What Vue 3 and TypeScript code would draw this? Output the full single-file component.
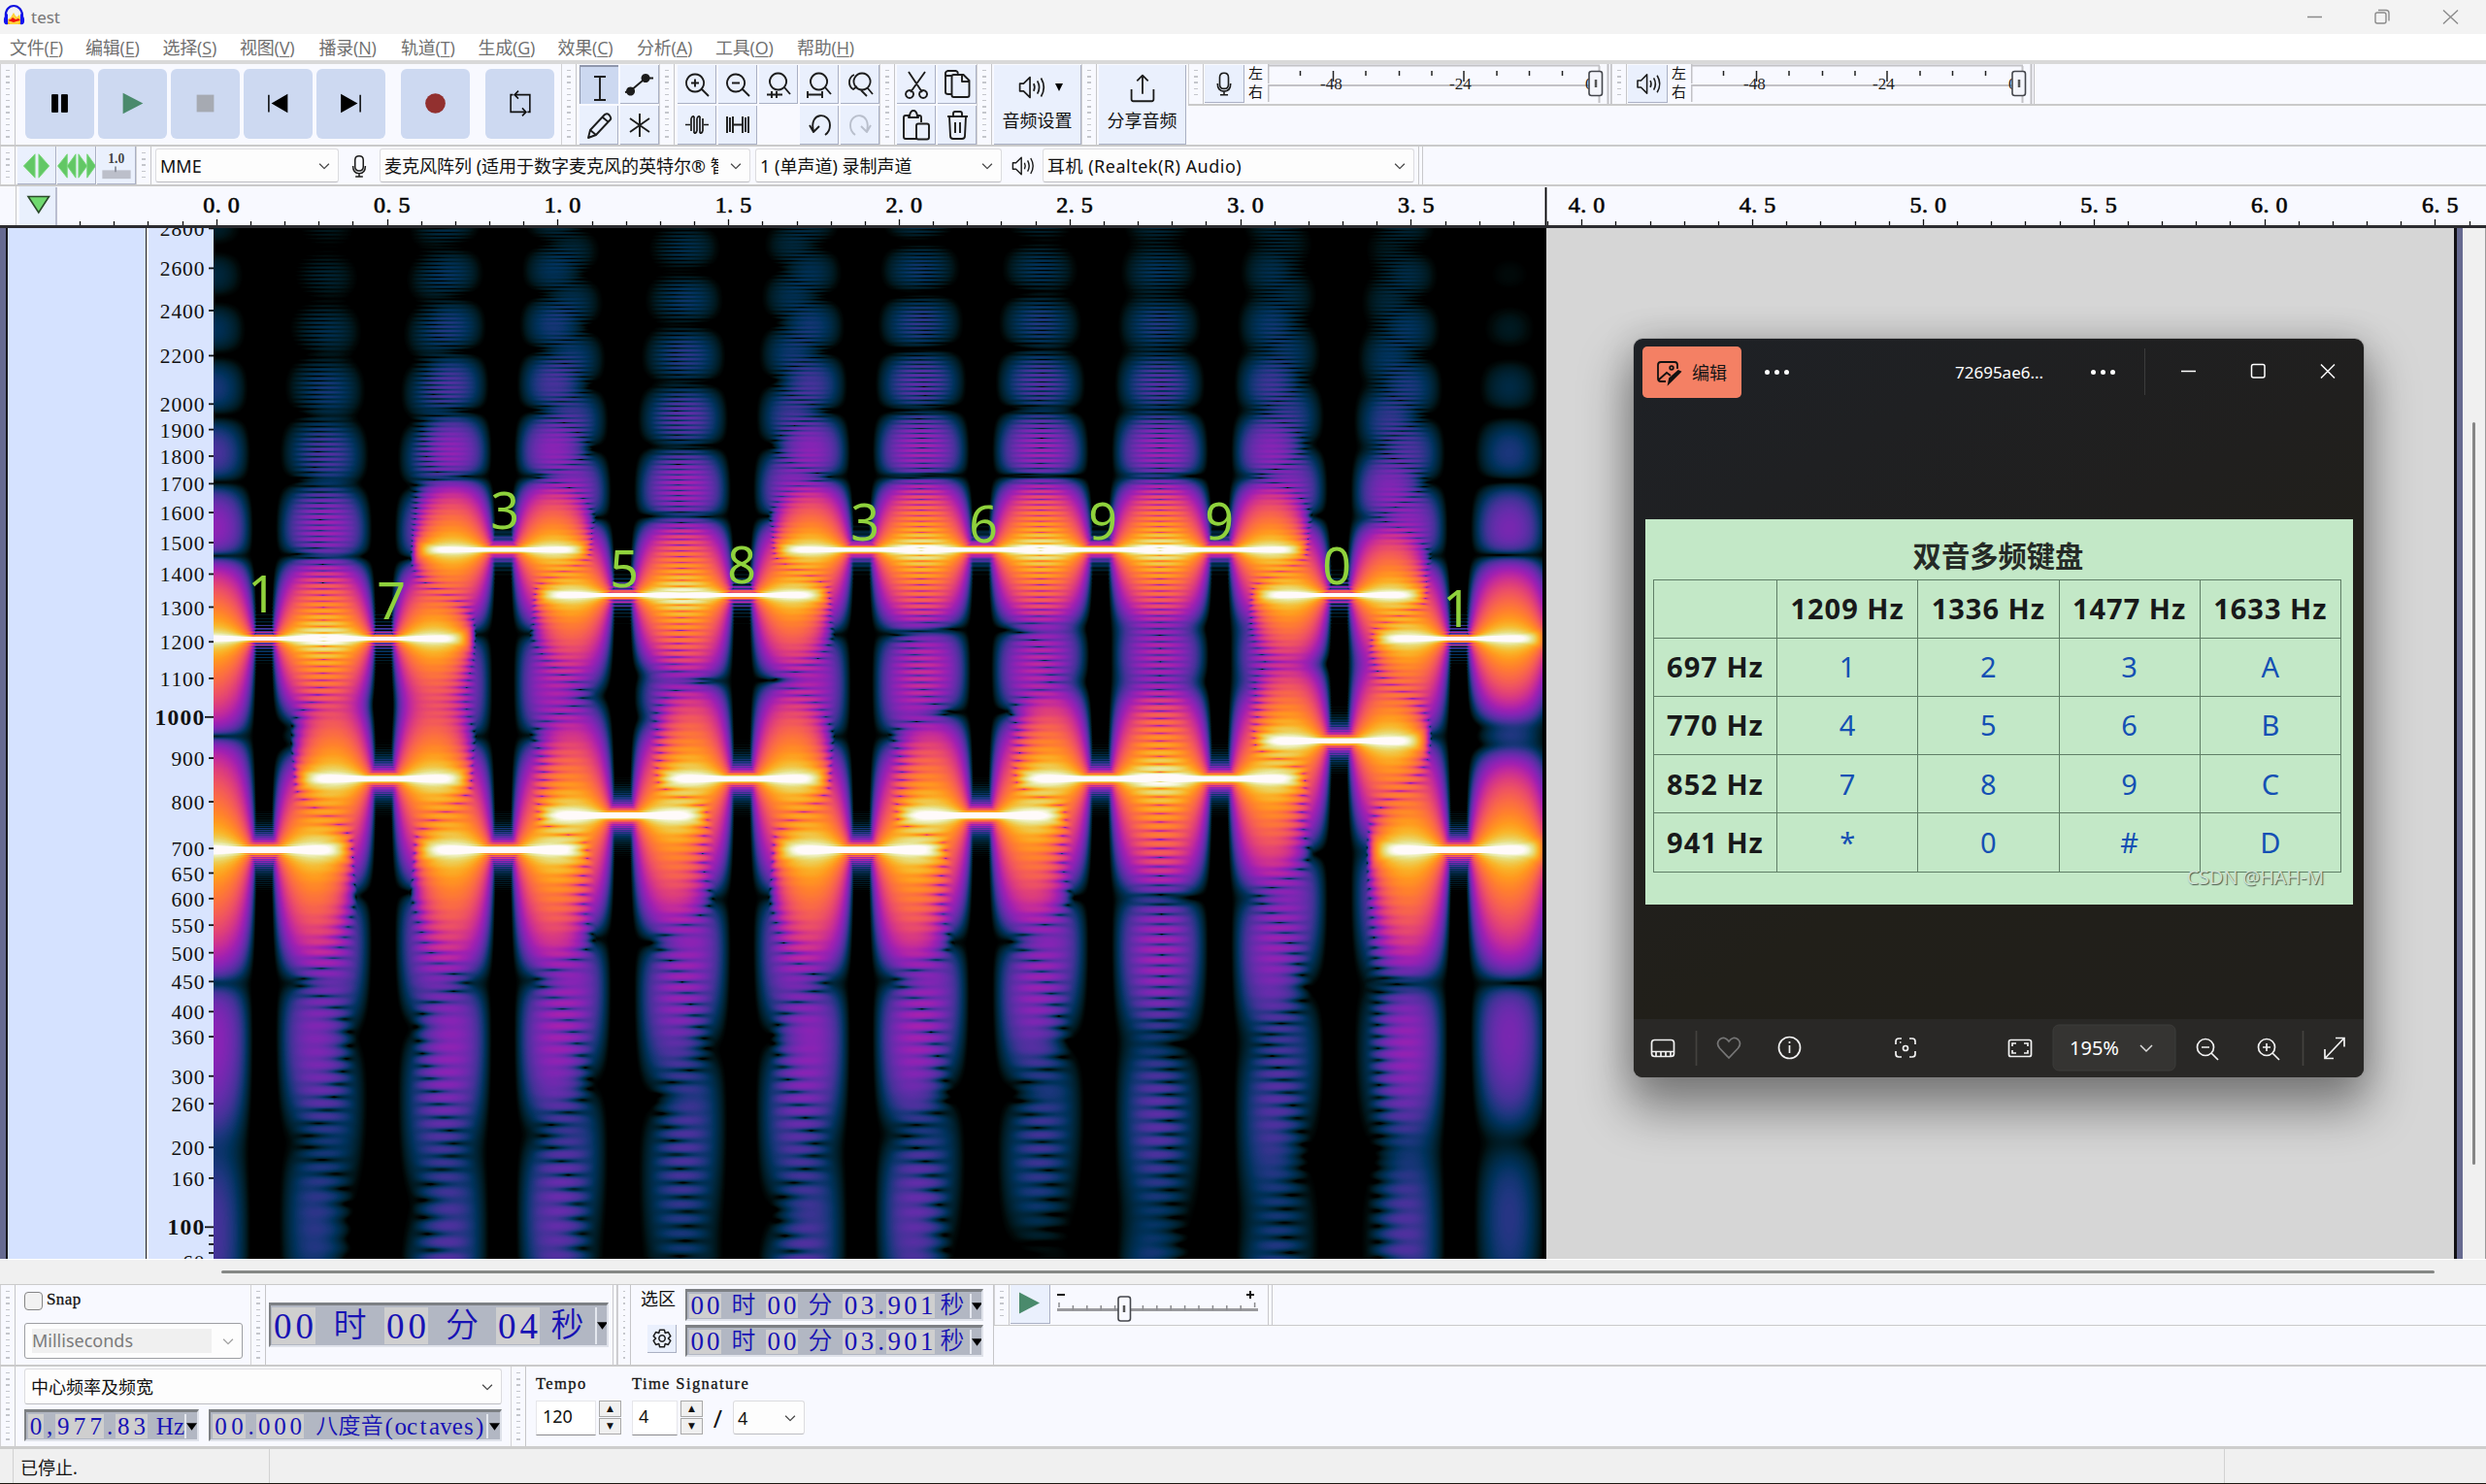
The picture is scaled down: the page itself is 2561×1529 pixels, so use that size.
<script setup lang="ts">
import { h, onMounted, ref } from 'vue'

/* ---------- menu ---------- */
const menus = [
  ['文件', 'F', 10], ['编辑', 'E', 88], ['选择', 'S', 167.500], ['视图', 'V', 247], ['播录', 'N', 328.500], ['轨道', 'T', 413],
  ['生成', 'G', 492.500], ['效果', 'C', 574.500], ['分析', 'A', 656], ['工具', 'O', 737], ['帮助', 'H', 821],
].map((m, i, a) => ({ label: m[0], key: m[1], w: i < a.length - 1 ? (a[i + 1][2] as number) - (m[2] as number) : 80 }))

/* ---------- icons (40 x 40 box) ---------- */
interface Glyph { s?: string; f?: string; c?: string; w?: number }
const glyphs: Record<string, Glyph> = {
  ibeam: { s: 'M14 10h12M20 10v24M14 34h12' },
  envelope: { s: 'M5 28l5-1L26 13.500h8', f: 'M10.500 22.500a4.500 4.500 0 1 0 .1 0zM26 9a4.500 4.500 0 1 0 .1 0z' },
  pencil: { s: 'M9 33l2-8L26 9q3-2 5 1t1 4L17 30l-8 3zM11 25l6 5M24 12l6 5' },
  star: { s: 'M20 8v24M10 13l20 14M30 13L10 27' },
  zoomin: { s: 'M18 9.500a9 9 0 1 0 .1 0zM25 25l7 7M14 18.500h8M18 14.500v8' },
  zoomout: { s: 'M18 9.500a9 9 0 1 0 .1 0zM25 25l7 7M14 18.500h8' },
  zoomsel: { s: 'M19.500 8.500a8.500 8.500 0 1 0 .1 0zM26 23l6 7M8 30.500h16M13 27v7M18 27v7' },
  zoomfit: { s: 'M19.500 8.500a8.500 8.500 0 1 0 .1 0zM26 23l6 7M8 30.500h15M8 27v7M23 27v7' },
  zoomtog: { s: 'M22 8.500a8.500 8.500 0 1 0 .1 0zM28 24l5 6M14 10a8.500 8.500 0 0 0-1 15l4-3M21 26l6 6', w: 1.8 },
  trim: { s: 'M8 19.500h5M27 19.500h5M14 13v13M17 11v17M20 13v13M23 11v17M26 13v13M14 13q1.500-3 3-2M20 13q1.500-3 3-2M17 28q1.500 1 3-2M23 28q1.500 1 3-2', w: 1.7 },
  silence: { s: 'M9 11v17M12 12v15M15 11v17M15 19.500h10M25 11v17M28 12v15M31 11v17', w: 1.9 },
  undo: { s: 'M10 20l4 7 6-6M14 26C9 6 31 6 31 20c0 5-2 8-5 10' },
  redo: { s: 'M31 20l-4 7-6-6M27 26C32 6 10 6 10 20c0 5 2 8 5 10', c: '#b9bfcc' },
  cut: { s: 'M12 7l14 21M29 7L14 28M13 26a4 4 0 1 0 .1 0zM27 26a4 4 0 1 0 .1 0z' },
  copy: { s: 'M14 11H8.500q-2-4 2-5h8q3 1 2 3M8 8v20q0 2 3 2h3M14.500 12q0-2 2-2h10l6 6v15q0 2-2 2h-14q-2 0-2-2zM25 10v7h7' },
  paste: { s: 'M14 10h-5q-2 0-2 2v20q0 2 2 2h12M25 17v-5q0-2-2-2h-3M12 12q0-2 1-2 1-5 4-5t4 5q1 0 1 2zM22 18.500h9q2 0 2 2v12q0 2-2 2h-9q-2 0-2-2v-12q0-2 2-2z' },
  trash: { s: 'M10 11h21M16 11V8q0-2 2-2h5q2 0 2 2v3M12 11l1 20q0 3 3 3h9q3 0 3-3l1-20M18 17v11M23 17v11' },
  mic: { s: 'M20 8q5 0 5 5v8q0 5-5 5t-5-5v-8q0-5 5-5zM12.500 20q0 9 7.500 9t7.500-9M20 29v4M15.500 33h9', w: 1.8 },
  speaker: { s: 'M8 16h4l7-7v22l-7-7H8zM23 16q2 4 0 8M27 13q4 7 0 14M31 10q6 10 0 20', w: 1.8 },
  share: { s: 'M8 22v11q0 2 2 2h20q2 0 2-2V22M20 27V7M14 13l6-6 6 6' },
  gear: { s: 'M20 16a4 4 0 1 0 .1 0zM17 9h6l1 4 4-1 3 5-3 3 3 3-3 5-4-1-1 4h-6l-1-4-4 1-3-5 3-3-3-3 3-5 4 1z' },
  chev: { s: 'M12.500 16.500l7.500 7.500 7.500-7.500', c: '#444', w: 1.9 },
}
const Icon = (p: { n: string; size?: number }) => {
  const g = glyphs[p.n]
  const c = g.c ?? '#1c1c1c'
  const s = p.size ?? 40
  return h('svg', { width: s, height: s, viewBox: '0 0 40 40', style: 'display:block;flex:none' }, [
    g.s ? h('path', { d: g.s, fill: 'none', stroke: c, 'stroke-width': g.w ?? 1.9, 'stroke-linejoin': 'round' }) : null,
    g.f ? h('path', { d: g.f, fill: c }) : null,
  ])
}
Icon.props = ['n', 'size']

/* ---------- numeric fields ---------- */
interface Part { t: string; w: number; hi?: boolean }
const Field = (p: { parts: Part[]; arrow: number }) =>
  h('div', { class: 'numfield' }, [
    ...p.parts.map(q =>
      h('span', { class: q.hi ? 'cells hi' : 'cells', style: { width: q.w + 'px' } },
        [...q.t].map(c => h('span', { class: c > '\u2e80' ? 'han' : '' }, c)))),
    h('span', { class: 'drop', style: { width: p.arrow + 'px' } }, [
      h('svg', { width: 11, height: 8, viewBox: '0 0 12 8' }, [h('path', { d: 'M0 0h12L6 8z' })]),
    ]),
  ])
Field.props = ['parts', 'arrow']
const bigTime: Part[] = [
  { t: '00', w: 45, hi: true }, { t: '时', w: 71 }, { t: '00', w: 45, hi: true }, { t: '分', w: 70 },
  { t: '04', w: 45, hi: true }, { t: '秒', w: 57 },
]
const selTime: Part[] = [
  { t: '00', w: 33, hi: true }, { t: '时', w: 46 }, { t: '00', w: 33, hi: true }, { t: '分', w: 46 },
  { t: '03', w: 34, hi: true }, { t: '.', w: 11 }, { t: '901', w: 50, hi: true }, { t: '秒', w: 36 },
]
const freqParts: Part[] = [
  { t: '0', w: 16, hi: true }, { t: ',', w: 12 }, { t: '977', w: 50, hi: true }, { t: '.', w: 12 },
  { t: '83', w: 33, hi: true }, { t: ' Hz', w: 38 },
]
const octParts: Part[] = [
  { t: '00', w: 34, hi: true }, { t: '.', w: 11 }, { t: '000', w: 49, hi: true }, { t: ' ', w: 12 },
  { t: '八度音', w: 70 }, { t: '(octaves)', w: 105 },
]

/* ---------- rulers ---------- */
const PX = 351.65
const X0 = 222.7
const ruler = Array.from({ length: 71 }, (_, i) => i - 4)
  .map(i => ({ i, x: Math.round(X0 + (i * PX) / 10) + 0.5, big: i % 5 === 0 && i >= 0 }))
const rulerLabels = Array.from({ length: 14 }, (_, i) => ({ t: (i / 2).toFixed(1), x: X0 - 13.5 + (i * PX) / 2 }))

const mel = (f: number) => 1127 * Math.log(1 + f / 700)
const yOf = (f: number) => 640.7 - 0.6186 * (mel(f) - 778.7)
const freqTicks = [2800, 2600, 2400, 2200, 2000, 1900, 1800, 1700, 1600, 1500, 1400, 1300, 1200, 1100, 1000, 900, 800, 700, 650,
  600, 550, 500, 450, 400, 360, 300, 260, 200, 160, 100, 90, 80, 70, 60]
  .map(f => {
    const t = [90, 80, 70].includes(f) ? '' : String(f)
    const bold = f === 1000 || f === 100
    const step = bold ? 13 : 11.7
    return { f, t, bold, y: yOf(f), xs: [...t].map((_, i) => 58.5 - (t.length - i) * step).join(' ') }
  })

/* ---------- spectrogram of a dialled number ---------- */
const notes = [
  ['1', 50, 393], ['7', 183, 400], ['3', 300, 307], ['5', 423, 367], ['8', 544, 363], ['3', 671, 319],
  ['6', 793, 321], ['9', 916, 318], ['9', 1036, 318], ['0', 1157, 364], ['1', 1281, 408],
] as [string, number, number][]
const stops: [number, number, number, number][] = [
  [0, 0, 0, 0], [0.05, 1, 10, 10], [0.1, 0, 26, 34], [0.15, 0, 38, 60], [0.2, 0, 50, 92], [0.25, 28, 54, 125], [0.3, 68, 50, 152],
  [0.35, 100, 44, 170], [0.4, 132, 36, 180], [0.45, 162, 32, 176], [0.5, 194, 42, 155], [0.55, 220, 60, 125],
  [0.6, 238, 82, 98], [0.65, 250, 105, 70], [0.7, 255, 128, 45], [0.75, 255, 154, 30], [0.8, 248, 182, 42],
  [0.85, 236, 208, 90], [0.9, 230, 228, 148], [0.95, 242, 244, 208], [1, 255, 250, 250],
]
const palette = Array.from({ length: 256 }, (_, i) => {
  const v = i / 255
  const k = Math.max(1, stops.findIndex(s => s[0] >= v))
  const [a, b] = [stops[k - 1], stops[k]]
  const u = (v - a[0]) / (b[0] - a[0])
  return [1, 2, 3].map(j => a[j] + (b[j] - a[j]) * u)
})

function fft(re: Float64Array, im: Float64Array) {
  const n = re.length
  for (let i = 1, j = 0; i < n; i++) {
    let bit = n >> 1
    for (; j & bit; bit >>= 1) j ^= bit
    j ^= bit
    if (i < j) {
      let t = re[i]; re[i] = re[j]; re[j] = t
      t = im[i]; im[i] = im[j]; im[j] = t
    }
  }
  const cs = new Float64Array(n / 2)
  const sn = new Float64Array(n / 2)
  for (let i = 0; i < n / 2; i++) { cs[i] = Math.cos((2 * Math.PI * i) / n); sn[i] = -Math.sin((2 * Math.PI * i) / n) }
  for (let len = 2; len <= n; len <<= 1) {
    const half = len >> 1
    const st = n / len
    for (let i = 0; i < n; i += len) {
      for (let k = 0; k < half; k++) {
        const wr = cs[k * st], wi = sn[k * st]
        const a = i + k, b = a + half
        const xr = re[b] * wr - im[b] * wi
        const xi = re[b] * wi + im[b] * wr
        re[b] = re[a] - xr; im[b] = im[a] - xi
        re[a] += xr; im[a] += xi
      }
    }
  }
}

const canvas = ref<HTMLCanvasElement | null>(null)
const CW = 1373
const CH = 1062
onMounted(() => {
  const ctx = canvas.value!.getContext('2d')!
  const sr = 16000, N = 4096, M = 8192
  const tone = 0.3, period = 0.35, fade = sr / 250
  const rows: Record<string, number> = { '1': 697, '3': 697, '5': 770, '6': 770, '7': 852, '8': 852, '9': 852, '0': 941 }
  const cols: Record<string, number> = { '1': 1209, '7': 1209, '5': 1336, '8': 1336, '0': 1336, '3': 1477, '6': 1477, '9': 1477 }
  const sig = new Float64Array(Math.round(3.901 * sr))
  notes.forEach(([k], n) => {
    const start = Math.round(n * period * sr)
    const len = Math.round(tone * sr)
    for (let i = 0; i < len; i++) {
      const g = Math.min(1, i / fade, (len - i) / fade)
      sig[start + i] = 0.5 * g * (Math.sin((2 * Math.PI * rows[k] * i) / sr) + Math.sin((2 * Math.PI * cols[k] * i) / sr))
    }
  })
  const win = Float64Array.from({ length: N }, (_, i) => (0.5 - 0.5 * Math.cos((2 * Math.PI * i) / N)) * (4 / N))
  const img = ctx.createImageData(CW, CH)
  const bins = Array.from({ length: CH }, (_, y) => {
    const m = 778.7 + (640.7 - y - 0.5) / 0.6186
    return (700 * (Math.exp(m / 1127) - 1) * M) / sr
  })
  const re = new Float64Array(M), im = new Float64Array(M)
  const db = new Float64Array(2000)
  for (let x = 0; x < CW; x += 2) {
    re.fill(0); im.fill(0)
    for (let c = 0; c < 2; c++) {
      const s = Math.round(((x + c + 1.2) / PX) * sr) - N / 2
      const out = c ? im : re
      for (let i = 0; i < N; i++) out[i] = (sig[s + i] || 0) * win[i]
    }
    fft(re, im)
    for (let c = 0; c < 2; c++) {
      if (x + c > 1368) continue
      for (let k = 1; k < 2000; k++) {
        const j = M - k
        const r = c ? (im[k] + im[j]) / 2 : (re[k] + re[j]) / 2
        const q = c ? (re[j] - re[k]) / 2 : (im[k] - im[j]) / 2
        db[k] = 10 * Math.log10(r * r + q * q + 1e-14)
      }
      for (let y = 0; y < CH; y++) {
        const b = bins[y], k = Math.floor(b), u = b - k
        const v = (db[k] * (1 - u) + db[k + 1] * u + 100) / 80
        const p = palette[Math.max(0, Math.min(255, Math.round(v * 255)))]
        const o = (y * CW + x + c) * 4
        img.data[o] = p[0]; img.data[o + 1] = p[1]; img.data[o + 2] = p[2]; img.data[o + 3] = 255
      }
    }
  }
  ctx.putImageData(img, 0, 0)
})

const dtmf = [['697 Hz', '1', '2', '3', 'A'], ['770 Hz', '4', '5', '6', 'B'], ['852 Hz', '7', '8', '9', 'C'], ['941 Hz', '*', '0', '#', 'D']]
const meterTicks = [33.5, 67.5, 101, 135.5, 169, 202, 236, 269.5, 303.5]
</script>

<template>
  <div class="app">
    <header class="title">
      <svg width="25" height="36" viewBox="0 0 25 36">
        <path d="M4 25q4-5 9-9 6 4 8 9z" fill="#ffb000" /><path d="M6 20l3-2 3-5 3 5 3-3 2 6-3 4H8z" fill="#ffd23a" />
        <path d="M6 21l3-1 2-2 3 2 3-1 2 2-4 1-3 1-3-1z" fill="#f01010" />
        <path d="M4 18C2 2 22 2 21 18" fill="none" stroke="#1010e0" stroke-width="2.200" />
        <path d="M6 14q-5 3-4 9 1 3 4 2zM19 14q5 3 4 9-1 3-4 2z" fill="#1414f0" />
      </svg>
      <span class="tt">test</span>
      <svg class="winbtns" width="200" height="34" viewBox="0 0 200 34" fill="none" stroke="#8b8b8b" stroke-width="1.400">
        <path d="M16 16.500h15M156 9.500l15 14M171 9.500l-15 14" />
        <rect x="86" y="12" width="11" height="11" rx="2" /><path d="M89 9.500h8q3 0 3 3v8" />
      </svg>
    </header>
    <nav class="menu">
      <span v-for="m in menus" :key="m.key" :style="{ width: m.w + 'px' }">{{ m.label }}(<u>{{ m.key }}</u>)</span>
    </nav>

    <div class="bar row1">
      <i class="grip" />
      <div class="transport">
        <b><svg viewBox="0 0 72 72"><path d="M28 27h6v18h-6zM38 27h6v18h-6z" stroke="#000" stroke-width="1" stroke-linejoin="round" /></svg></b>
        <b><svg viewBox="0 0 72 72"><path d="M26 25v22l21-11z" fill="#4a8a6c" /></svg></b>
        <b><svg viewBox="0 0 72 72"><path d="M27 27h18v18H27z" fill="#a6aab2" /></svg></b>
        <b><svg viewBox="0 0 72 72"><path d="M46 26v20L29 36zM25.500 27h1.500v18h-1.500z" /></svg></b>
        <b><svg viewBox="0 0 72 72"><path d="M25.500 26v20L43 36zM45 27h1.500v18H45z" /></svg></b>
        <b class="gap"><svg viewBox="0 0 72 72"><circle cx="36" cy="36" r="10.500" fill="#92302f" /></svg></b>
        <b class="gap"><svg viewBox="0 0 72 72"><path d="M29 27h-2.500v18H42M38.500 41l4 4-4 4M44 45h2.500V27H31M34.500 23l-4 4 4 4" fill="none" stroke="#111" stroke-width="1.600" /></svg></b>
      </div>
      <i class="grip" style="margin-left:9px" />
      <div class="grid g2">
        <b class="pressed"><Icon n="ibeam" /></b><b><Icon n="envelope" /></b><b><Icon n="pencil" /></b><b><Icon n="star" /></b>
      </div>
      <i class="grip" />
      <div class="grid g5">
        <b><Icon n="zoomin" /></b><b><Icon n="zoomout" /></b><b><Icon n="zoomsel" /></b><b><Icon n="zoomfit" /></b><b><Icon n="zoomtog" /></b>
        <b><Icon n="trim" /></b><b><Icon n="silence" /></b><s /><b><Icon n="undo" /></b><b><Icon n="redo" /></b>
      </div>
      <i class="grip" />
      <div class="grid g2" style="padding-left:1px"><b><Icon n="cut" /></b><b><Icon n="copy" /></b><b><Icon n="paste" /></b><b><Icon n="trash" /></b></div>
      <i class="grip" />
      <b class="bigbtn"><span class="ic"><Icon n="speaker" :size="38" /><svg width="8" height="8" viewBox="0 0 8 8"><path d="M0 0h8L4 8z" /></svg></span>音频设置</b>
      <i class="grip" />
      <b class="bigbtn"><span class="ic"><Icon n="share" :size="38" /></span>分享音频</b>
      <div class="meters">
        <template v-for="n in ['mic', 'speaker']" :key="n">
          <i class="grip" />
          <b class="mbtn"><Icon :n="n" :size="n === 'mic' ? 36 : 35" /></b>
          <div class="lr"><span>左</span><span>右</span></div>
          <svg class="meter" width="354" height="41" viewBox="0 0 354 41">
            <path d="M0 1.500h342M0 22h342M.5 0v20M.5 23v16M341.500 2v38M350.500 0v41M354 0v41" stroke="#c2c2c6" stroke-width="2" fill="none" />
            <path v-for="(x, i) in meterTicks" :key="i" :d="i === 1 || i === 5 ? `M${x} 7v11` : `M${x} 7v5`" stroke="#222" stroke-width="1.500" />
            <text x="54" y="26">-48</text><text x="187" y="26">-24</text><text x="327" y="26">0</text>
            <rect x="331" y="7.500" width="13.500" height="25" rx="2.500" fill="#f4f5fb" stroke="#44464c" stroke-width="1.600" />
            <path d="M338 16v8" stroke="#555" stroke-width="2.500" />
          </svg>
        </template>
      </div>
    </div>

    <div class="bar row2">
      <i class="grip" />
      <div class="speed">
        <b><svg viewBox="0 0 40 40"><path d="M18 8v25L6 20.500zM22 8v25l11-12.500z" fill="#62c765" stroke="#7ad97d" /></svg></b>
        <b><svg viewBox="0 0 40 40"><path d="M10 8v25L0 20.500zM19 8v25l-9-12.500zM22 8v25l9-12.500zM31 8v25l9-12.500z" fill="#62c765" stroke="#7ad97d" /></svg></b>
        <b><svg viewBox="0 0 40 40"><text x="11" y="17">1.0</text><path d="M5 25h30v9H5z" fill="#bcbfca" /><path d="M19 21v6" stroke="#9296a2" stroke-width="2" /></svg></b>
      </div>
      <i class="grip" />
      <div class="combo" style="width:189px;margin-left:3px"><span>MME</span><Icon n="chev" :size="26" /></div>
      <span class="dev"><Icon n="mic" :size="34" /></span>
      <div class="combo" style="width:382px"><span>麦克风阵列 (适用于数字麦克风的英特尔® <span class="cut">智</span></span><Icon n="chev" :size="26" /></div>
      <div class="combo" style="width:254px;margin-left:5px"><span>1 (单声道) 录制声道</span><Icon n="chev" :size="26" /></div>
      <span class="dev"><Icon n="speaker" :size="32" /></span>
      <div class="combo wide" style="width:383px"><span>耳机 (Realtek(R) Audio)</span><Icon n="chev" :size="26" /></div>
      <i class="dbl" />
    </div>

    <div class="rulerrow">
      <svg width="2561" height="43" viewBox="0 0 2561 43">
        <path d="M16.500 0v42" stroke="#c8c8c8" />
        <path d="M20 0h38v40h-38z" fill="#e9f0fd" /><path d="M58 1v39" stroke="#a9adc0" stroke-width="1.500" />
        <path d="M29 10.500h21.500L39.800 27z" fill="#6fd96f" stroke="#2b4a2b" stroke-width="1.600" />
        <path v-for="t in ruler" :key="t.i" :d="`M${t.x} ${t.big ? 34 : 36}V41`" stroke="#111" stroke-width="1.300" />
        <text v-for="l in rulerLabels" :key="l.t" :x="`${l.x} ${l.x + 12.5} ${l.x + 25.5}`" y="27">{{ l.t }}</text>
        <path d="M1592.500 1v41" stroke="#000" stroke-width="1.800" />
        <path d="M0 41.500h2561" stroke="#2c2c30" stroke-width="3" />
      </svg>
    </div>

    <main class="track">
      <div class="edge" />
      <div class="panel" />
      <svg class="vruler" width="67" height="1062" viewBox="0 0 67 1062">
        <g v-for="t in freqTicks" :key="t.f">
          <path :d="t.bold ? `M58 ${t.y}h9` : `M62 ${t.y}h5`" stroke="#111" stroke-width="1.800" />
          <text v-if="t.t" :x="t.xs" :y="t.y + 8" :class="{ bold: t.bold }">{{ t.t }}</text>
        </g>
      </svg>
      <div class="spec">
        <canvas ref="canvas" :width="CW" :height="CH" />
        <span v-for="(n, i) in notes" :key="i" class="note" :style="{ left: n[1] + 'px', top: n[2] - 53 + 'px' }">{{ n[0] }}</span>
      </div>
      <div class="empty" />
      <div class="edge right" />
      <div class="vscroll"><i /></div>

      <section class="photo">
        <div class="phead">
          <span class="edit">
            <svg width="30" height="30" viewBox="0 0 30 30" fill="none" stroke="#111" stroke-width="1.800"><path d="M12 25H7q-3 0-3-3V8q0-3 3-3h14q3 0 3 3v4M5 23l8-7 4 3" /><circle cx="18" cy="11" r="1.800" /><path d="M27 15l-8 8-4 4 1-5 9-8z" fill="#111" /></svg>编辑
          </span>
          <em class="dots"><i /><i /><i /></em>
          <span class="name">72695ae6...</span>
          <em class="dots"><i /><i /><i /></em>
          <u />
          <svg width="170" height="30" viewBox="0 0 170 30" fill="none" stroke="#fff" stroke-width="1.500"><path d="M7 14.500h15M151 7.500l14 14M165 7.500l-14 14" /><rect x="79.500" y="7.500" width="13.500" height="13.500" rx="2" /></svg>
        </div>
        <div class="sheet">
          <h3>双音多频键盘</h3>
          <table>
            <tr><th /><th>1209 Hz</th><th>1336 Hz</th><th>1477 Hz</th><th>1633 Hz</th></tr>
            <tr v-for="r in dtmf" :key="r[0]"><th>{{ r[0] }}</th><td v-for="c in r.slice(1)" :key="c">{{ c }}</td></tr>
          </table>
          <span class="mark">CSDN @HAH-M</span>
        </div>
        <div class="pfoot">
          <svg width="752" height="60" viewBox="0 0 752 60" fill="none" stroke="#f2f2f2" stroke-width="1.700">
            <rect x="18.500" y="21.500" width="23" height="17" rx="3" /><path d="M18 33.500h24M23 34v5M28 34v5M33 34v5M38 34v5" />
            <path d="M64.500 12v36M689.500 12v36" stroke="#44423f" />
            <path d="M98 40L88.500 30q-4-5 0-9 5-4 9.500 2 4.500-6 9.500-2 4 4 0 9z" stroke="#777" />
            <circle cx="160.500" cy="29.500" r="11" /><path d="M160.500 27v8M160.500 23v2" />
            <path d="M270 26v-3q0-3 3-3h3M284 20h3q3 0 3 3v3M290 33v3q0 3-3 3h-3M276 39h-3q-3 0-3-3v-3" /><circle cx="280" cy="30" r="2.500" /><path d="M274 24h1.500" />
            <rect x="386.500" y="21.500" width="23" height="17" rx="2" /><path d="M390 28v-3h4M402 25h4v3M406 32v3h-4M394 35h-4v-3" />
            <rect x="432" y="6" width="126" height="47" rx="6" fill="#353432" stroke="#3d3c3a" stroke-width="1" />
            <path d="M522 27l6 6 6-6" stroke="#ddd" stroke-width="1.500" />
            <circle cx="589" cy="29" r="8.500" /><path d="M585 29h8M595 35l7 7" />
            <circle cx="652" cy="29" r="8.500" /><path d="M648 29h8M652 25v8M658 35l7 7" />
            <path d="M712 40.500l20-21M723 19.500h9v9M712 31v9.500h9" />
            <text x="449" y="37" stroke="none" fill="#fff">195%</text>
          </svg>
        </div>
      </section>
    </main>

    <div class="hscroll"><i /></div>

    <footer class="bars">
      <div class="bar rowa">
        <i class="grip" />
        <div class="snap">
          <label><i />Snap</label>
          <div class="combo off"><span>Milliseconds</span><Icon n="chev" :size="26" /></div>
        </div>
        <i class="grip" />
        <div class="big"><Field :parts="bigTime" :arrow="14" /></div>
        <i class="dbl" style="margin-left:4px" />
        <i class="grip" style="margin-left:0;width:14px" />
        <div class="sel">
          <div class="selside"><span>选区</span><b><Icon n="gear" :size="32" /></b></div>
          <div class="selfields"><Field :parts="selTime" :arrow="13" /><Field :parts="selTime" :arrow="13" /></div>
        </div>
        <div class="play">
          <i class="grip" />
          <b><svg width="41" height="38" viewBox="0 0 41 38"><path d="M9 7.500v22l21-11z" fill="#4a8a6c" /></svg></b>
          <svg width="224" height="40" viewBox="0 0 224 40">
            <path d="M7 25.500h207" stroke="#9a9a9e" stroke-width="3" />
            <path v-for="i in 15" :key="i" :d="`M${9 + (i - 1) * 14.400} ${i === 1 || i === 15 ? 18 : 21}v5`" stroke="#8a8a8e" stroke-width="1.500" />
            <path d="M7 10h8M202 10h8M206 6v8" stroke="#111" stroke-width="2" />
            <rect x="70" y="12" width="12.500" height="25" rx="2.500" fill="#f8f9ff" stroke="#44464c" stroke-width="1.600" /><path d="M76 21v7" stroke="#555" stroke-width="2.500" />
          </svg>
          <i class="dbl" style="margin-left:0" />
        </div>
      </div>
      <div class="bar rowb">
        <i class="grip" />
        <div class="spectral">
          <div class="combo"><span>中心频率及频宽</span><Icon n="chev" :size="26" /></div>
          <div class="ff"><Field :parts="freqParts" :arrow="14" /><Field :parts="octParts" :arrow="14" /></div>
        </div>
        <i class="grip" />
        <div class="tempo">
          <div class="lbl"><span style="width:99px">Tempo</span><span>Time Signature</span></div>
          <div class="ins">
            <span class="inp" style="width:62px">120</span><span class="spin"><i>▲</i><i>▼</i></span>
            <span class="inp" style="width:47px;margin-left:11px">4</span><span class="spin"><i>▲</i><i>▼</i></span>
            <span class="slash">/</span>
            <div class="combo" style="width:74px"><span>4</span><Icon n="chev" :size="26" /></div>
          </div>
        </div>
      </div>
      <div class="status"><i style="width:14px" /><span>已停止.</span><i style="width:2014px" /></div>
    </footer>
  </div>
</template>

<style>
body { margin: 0; overflow: hidden; }
.numfield { display: flex; align-items: stretch; box-sizing: border-box; background: #b2b7c3; border: 2px solid; border-color: #7d8084 #dfe2ea #dfe2ea #7d8084; border-top-width: 3px; color: #1712b4; font-family: "Liberation Serif", "Noto Sans CJK SC", serif; padding: 2px 0 1px 2px; }
.numfield .cells { display: flex; align-items: center; flex: none; white-space: pre; }
.numfield .cells.hi { background: #cfcfcf; }
.numfield .cells > span { flex: 1; text-align: center; line-height: 1; }
.numfield .cells > .han { font-size: .92em; font-weight: 350; }
.numfield .drop { display: flex; align-items: center; justify-content: center; border-left: 2px solid #e4e7ee; box-sizing: border-box; margin-left: auto; overflow: hidden; }
.numfield svg { flex: none; }
</style>
<style scoped>
.app { width: 2561px; height: 1529px; overflow: hidden; background: #f0f0f0; font-family: "Noto Sans", "Noto Sans CJK SC", sans-serif; font-size: 18px; color: #111; display: flex; flex-direction: column; }
.app > * { flex: none; }
.app b { font-weight: 400; }
.title { height: 35px; background: #f3f3f3; display: flex; align-items: center; padding-left: 2px; }
.tt { font-size: 17px; color: #777; margin-left: 5px; }
.winbtns { margin-left: auto; }
.menu { height: 27px; background: #fff; display: flex; align-items: center; padding-left: 10px; font-size: 18px; letter-spacing: -.2px; color: #6f6f6f; font-family: "Open Sans", "Noto Sans CJK SC", sans-serif; white-space: nowrap; line-height: 28px; }
.menu u { text-underline-offset: 2px; text-decoration-thickness: 1px; }
.menu span { flex: none; }
.bar { background: #f8f9ff; display: flex; box-sizing: border-box; }
.row1 { height: 87px; border-top: 4px solid #d9d9d9; }
.row2 { height: 43px; border-top: 2px solid #cacaca; border-bottom: 2px solid #cacaca; align-items: center; }
.grip { flex: none; width: 16px; margin-right: 1px; align-self: stretch; box-sizing: border-box; border-right: 1.500px solid #c6c6c9; border-left: 1px solid #d2d2d5; padding: 6px 5px; background: repeating-linear-gradient(#c4c6cc 0 1.500px, transparent 1.500px 6.200px) content-box; }
.transport { display: flex; padding: 5px 0 0 9px; width: 552px; box-sizing: border-box; }
.transport b { width: 71px; height: 72px; border-radius: 6px; background: #cdd9f1; margin-right: 4px; flex: none; }
.transport b.gap { margin-left: 12px; }
.transport svg { display: block; }
.grid { display: grid; grid-auto-rows: 40px; gap: 2px; grid-template-columns: repeat(2, 40px); padding: 1px 0 0 2px; align-content: start; }
.g5 { grid-template-columns: repeat(5, 40px); }
.grid b, .mbtn, .bigbtn, .speed b, .play b, .selside b { background: #eaf0fd; box-sizing: border-box; border-right: 1.500px solid #aab0c4; border-bottom: 1.500px solid #aab0c4; overflow: hidden; }
.grid b.pressed { background: #ccd8f0; border: 0; border-top: 2px solid #8e96ac; border-left: 1px solid #8e96ac; }
.bigbtn { width: 90px; margin-left: 1px; height: 82px; margin-top: 1px; display: flex; flex-direction: column; align-items: center; font-size: 18px; line-height: 22px; flex: none; }
.bigbtn .ic { height: 46px; display: flex; align-items: center; gap: 6px; }
.meters { display: flex; height: 41px; border-bottom: 2px solid #cacaca; flex: 1; margin-left: 2px; }
.mbtn { width: 41px; height: 39px; margin-top: 1px; display: flex; align-items: center; justify-content: center; }
.lr { width: 24px; font-size: 15px; line-height: 19px; display: flex; flex-direction: column; padding-left: 4px; box-sizing: border-box; }
.meter text { font: 17px "Liberation Serif", serif; fill: #222; }
.speed { display: flex; gap: 1px; padding-left: 1px; height: 39px; }
.speed b { width: 40px; }
.speed b svg { display: block; width: 40px; height: 39px; }
.speed text { font: bold 14px "Liberation Serif", serif; fill: #444; }
.combo { flex: none; height: 35px; box-sizing: border-box; border: 1.500px solid #dcdcdf; border-bottom-color: #bdbdc2; border-radius: 3px; background: #fdfdfd; display: flex; align-items: center; padding: 0 1px 0 4px; line-height: 30px; white-space: nowrap; }
.combo > span { flex: 1; overflow: hidden; min-width: 0; }
.combo .cut { display: inline-block; width: 8px; overflow: hidden; vertical-align: bottom; }
.combo.wide > span { letter-spacing: .5px; }
.dev { width: 42px; display: flex; justify-content: center; }
.dbl { width: 5px; align-self: stretch; border: solid #c8c8cb; border-width: 0 1.500px; margin-left: 4px; flex: none; box-sizing: border-box; }
.rulerrow { height: 43px; background: #f8f9ff; }
.rulerrow svg, .hscroll, .vruler { display: block; }
.rulerrow text { font: 24px "Liberation Serif", serif; stroke: #111; stroke-width: .7px; }
.track { height: 1062px; display: flex; position: relative; background: #f0f0f0; }
.edge { width: 8px; background: #666a90; border-right: 2px solid #16171c; box-sizing: border-box; }
.panel { width: 143px; background: #d5e2ff; border-right: 1.500px solid #222; box-sizing: border-box; }
.vruler { background: #d9e4fe; border-left: 1.500px solid #fff; width: 67px; box-sizing: content-box; margin-left: 1px; flex: none; }
.vruler text { font: 21.500px "Liberation Serif", serif; fill: #111; }
.vruler text.bold { font-weight: bold; font-size: 23.500px; }
.spec { position: relative; width: 1373px; flex: none; background: #000; }
.spec canvas { display: block; }
.note { position: absolute; width: 40px; margin-left: -20px; text-align: center; color: #8fd23c; font: 400 52px/72px "Noto Sans", sans-serif; }
.empty { flex: 1; background: #d6d6d6; }
.edge.right { width: 9px; border: 0; border-left: 3px solid #101014; }
.vscroll { width: 24px; display: flex; justify-content: center; border-right: 1px solid #999; box-sizing: border-box; }
.vscroll i { width: 3px; margin: 200px 0 97px; background: #868686; border-radius: 2px; flex: none; }
.photo { position: absolute; left: 1683px; top: 114px; width: 752px; height: 761px; border-radius: 9px; background: linear-gradient(150deg, #1e2126, #201f1e 40%, #211f19 60%, #211f1c); box-shadow: 0 0 0 1px #8885, 0 28px 50px 6px rgba(0, 0, 0, .4), 0 0 36px rgba(0, 0, 0, .15); display: flex; flex-direction: column; }
.phead { height: 54px; margin: 7px 0 0 9px; display: flex; align-items: center; color: #fff; flex: none; }
.edit { width: 102px; height: 53px; border-radius: 5px; background: #f48064; color: #151515; display: flex; align-items: center; font-size: 18px; gap: 9px; padding-left: 12px; box-sizing: border-box; }
.dots { display: flex; gap: 5px; width: 25px; margin-left: 24px; }
.dots i { width: 5px; height: 5px; border-radius: 3px; background: #fff; }
.name { margin-left: 171px; font-size: 17px; width: 116px; }
.phead .name + .dots { margin-left: 24px; }
.phead u { width: 1px; height: 48px; background: #3c3c3c; margin: 0 30px 0 30px; }
.sheet { margin: 125px 11px 0 12px; height: 397px; background: #c3e8c7; position: relative; flex: none; overflow: hidden; padding: 0 0 0 8px; }
.sheet h3 { margin: 0; height: 61.500px; line-height: 73px; font-size: 29.300px; font-weight: 700; text-align: center; color: #252a26; font-family: "Noto Sans CJK SC", sans-serif; padding-right: 10px; }
table { border-collapse: collapse; width: 709px; height: 302px; table-layout: fixed; }
th, td { border: 1.500px solid #5f7e66; padding: 0; height: 59px; text-align: center; font-size: 29px; line-height: 58px; letter-spacing: 1px; color: #18191a; font-weight: 700; white-space: nowrap; }
th:first-child { width: 126px; }
td { color: #1450b4; font-weight: 400; letter-spacing: 0; }
.mark { position: absolute; right: 30px; bottom: 13px; font-size: 20px; line-height: 30px; color: #cfe0d2; text-shadow: 1px 1px 1px #4a5a4d; letter-spacing: -.2px; }
.pfoot { margin-top: auto; height: 60px; background: #292826; border-radius: 0 0 9px 9px; }
.pfoot text { font-size: 20px; font-family: "Noto Sans", sans-serif; }
.hscroll { height: 26px; border-top: 1px solid #fff; box-sizing: border-box; overflow: hidden; }
.hscroll i { display: block; width: 2280px; height: 3px; margin: 10.500px 0 0 228px; background: #858785; border-radius: 2px; }
.bars { height: 206px; display: flex; flex-direction: column; }
.bars > * { flex: none; }
.rowa { height: 83px; border-top: 1.500px solid #cacaca; }
.snap { width: 241px; padding: 7px 0 0 8px; box-sizing: border-box; font-size: 18px; }
.snap label { display: flex; height: 32px; font: 17px/15px "Liberation Serif", serif; letter-spacing: .4px; gap: 4px; -webkit-text-stroke: .3px; }
.snap label i { width: 17px; height: 17px; border: 1.500px solid #858585; border-radius: 4px; background: #f2f2f2; }
.combo.off { width: 225px; height: 37px; color: #7b7b7b; border-color: #9d9fa3; padding-left: 7px; }
.combo.off > span { background: #f0f0f0; margin-right: 4px; line-height: 25px; }
.combo.off svg { opacity: .5; }
.big { padding-top: 18px; width: 352px; padding-left: 2px; box-sizing: border-box; flex: none; }
.big .numfield { height: 46px; font-size: 37px; width: 350px; padding-left: 1px; }
.sel { display: flex; width: 373px; border-right: 1.500px solid #c6c6c9; box-sizing: border-box; flex: none; }
.selside { width: 55px; font: 18px/22px "Noto Sans CJK SC", sans-serif; padding: 2px 0 0 9px; box-sizing: border-box; display: flex; flex-direction: column; flex: none; }
.selside b { width: 30px; height: 29px; margin: 17px 0 0 7px; display: flex; align-items: center; justify-content: center; }
.selfields { display: flex; flex-direction: column; gap: 4px; padding-top: 4px; }
.selfields .numfield { width: 307px; height: 33px; font-size: 27px; }
.play { display: flex; flex: 1; height: 41px; border-bottom: 1.500px solid #cacaca; }
.play b { width: 41px; height: 40px; }
.rowb { height: 84px; border-top: 2px solid #cacaca; }
.spectral { width: 509px; padding: 2px 0 0 8px; box-sizing: border-box; flex: none; }
.spectral .combo { width: 492px; height: 37px; padding-left: 6px; }
.ff { display: flex; gap: 10px; padding-top: 5px; }
.ff .numfield { height: 33px; width: 180px; font-size: 25px; }
.ff .numfield:last-child { width: 302px; font-size: 25px; }
.tempo { padding: 8px 0 0 9px; }
.lbl { display: flex; font: 16.500px/20px "Liberation Serif", serif; height: 26px; letter-spacing: 1.400px; -webkit-text-stroke: .3px; }
.ins { display: flex; align-items: center; height: 37px; }
.inp { height: 36px; background: #fff; border: 1px solid #e6e6ea; border-bottom: 1.500px solid #8a8a8e; box-sizing: border-box; padding-left: 6px; line-height: 31px; }
.spin { display: flex; flex-direction: column; gap: 1px; margin-left: 3px; }
.spin i { width: 23px; height: 17px; border: 1px solid #a9a9a9; background: #f0f0f0; box-sizing: border-box; font: 9px/15px "DejaVu Sans", sans-serif; text-align: center; }
.slash { width: 31px; text-align: center; font-size: 25px; line-height: 30px; }
.status { height: 39px; box-sizing: border-box; border-top: 3px solid #cdcdcd; display: flex; border-bottom: 1px solid #1c1710; line-height: 38px; font-size: 18px; overflow: hidden; }
.status i { border-right: 1px solid #d2d2d2; box-sizing: border-box; }
.status span { width: 264px; padding-left: 7px; box-sizing: border-box; border-right: 1px solid #d2d2d2; }
</style>
